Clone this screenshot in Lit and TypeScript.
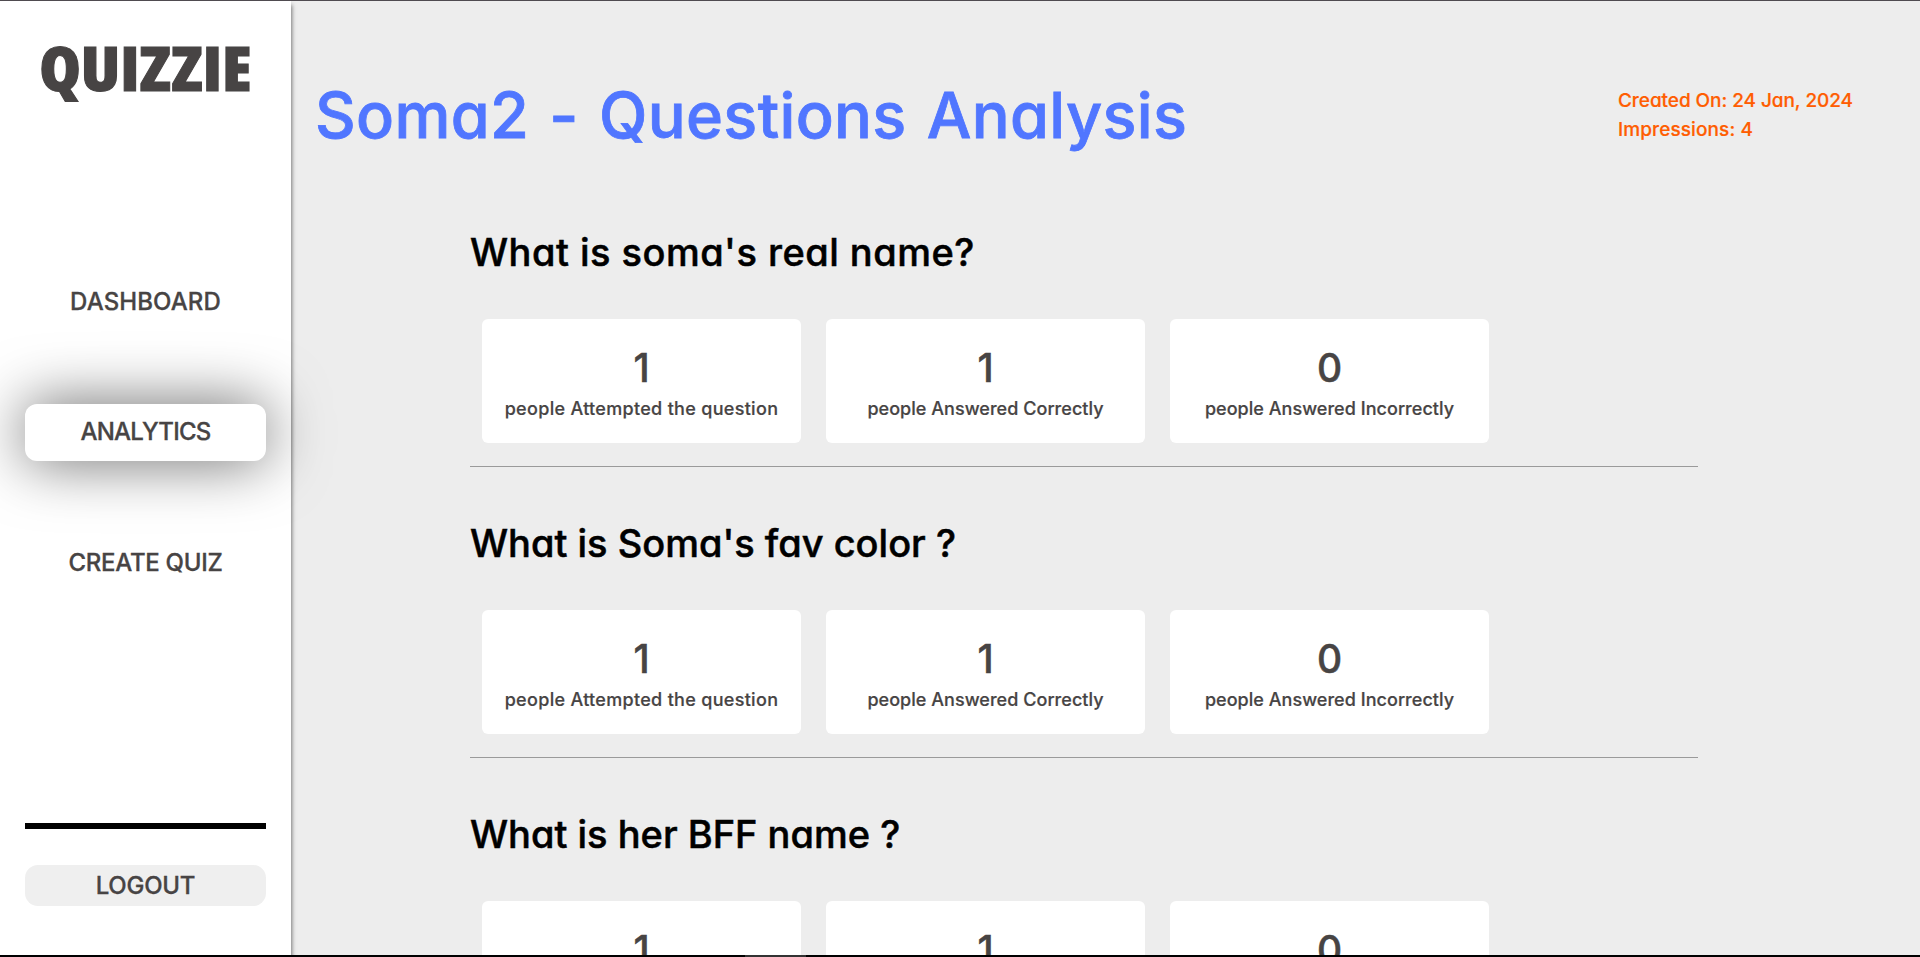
import { LitElement, html, css } from "lit";
import { customElement } from "lit/decorators.js";

interface Question {
  title: string;
  fit: string;
  attempted: number;
  correct: number;
  incorrect: number;
}

const QUESTIONS: Question[] = [
  { title: "What is soma's real name?", fit: "wide", attempted: 1, correct: 1, incorrect: 0 },
  { title: "What is Soma's fav color ?", fit: "", attempted: 1, correct: 1, incorrect: 0 },
  { title: "What is her BFF name ?", fit: "", attempted: 1, correct: 1, incorrect: 0 },
];

@customElement("quiz-sidebar")
class QuizSidebar extends LitElement {
  static styles = css`
    :host {
      display: flex;
      flex-direction: column;
      flex: none;
      box-sizing: border-box;
      width: 291px;
      padding: 26px 25px 49px;
      background: #fff;
      box-shadow: 1px 4px 4px rgba(0, 0, 0, 0.5);
      color: #474444;
      font: 500 24px/38px Inter, sans-serif;
      -webkit-text-stroke: 0.3px currentColor;
      position: relative;
      z-index: 1;
    }
    .logo {
      height: 80px;
      font: 800 61.5px/80px "Open Sans", sans-serif;
      font-stretch: 75%;
      -webkit-text-stroke: 1px #474444;
      text-align: center;
      white-space: nowrap;
      transform: scaleX(1.09);
    }
    nav {
      display: flex;
      flex-direction: column;
      gap: 73.5px;
      margin-top: 166px;
    }
    .item {
      height: 57px;
      box-sizing: border-box;
      padding: 10px 0 9px;
      border-radius: 12px;
      text-align: center;
      white-space: nowrap;
    }
    .active {
      padding: 9px 0 10px;
      background: #fff;
      box-shadow: 0 0 61px rgba(0, 0, 0, 0.6);
    }
    .dashboard { letter-spacing: 0.1px; }
    .analytics { letter-spacing: -0.75px; }
    .create { letter-spacing: -0.3px; }
    .rule {
      height: 6px;
      margin-top: auto;
      background: #000;
    }
    .logout {
      margin-top: 36px;
      height: 41px;
      line-height: 41px;
      letter-spacing: -0.25px;
      border-radius: 13px;
      background: #efefef;
      text-align: center;
    }
  `;

  render() {
    return html`
      <div class="logo">QUIZZIE</div>
      <nav>
        <div class="item dashboard">DASHBOARD</div>
        <div class="item active analytics">ANALYTICS</div>
        <div class="item create">CREATE QUIZ</div>
      </nav>
      <div class="rule"></div>
      <div class="logout">LOGOUT</div>
    `;
  }
}

@customElement("app-root")
class AppRoot extends LitElement {
  static styles = css`
    :host {
      display: flex;
      flex-direction: column;
      height: 957px;
      overflow: hidden;
      background: #ededed;
      font-family: Inter, sans-serif;
      font-weight: 500;
      font-feature-settings: "cv11";
    }
    .top {
      flex: none;
      height: 1px;
      background: #4f4b50;
    }
    .body {
      display: flex;
      flex: 1;
      min-height: 0;
      overflow: hidden;
    }
    .bottom {
      flex: none;
      height: 2px;
      padding-left: 745px;
      background: #000;
    }
    .thumb {
      width: 61px;
      height: 2px;
      background: #333;
    }
    main {
      flex: 1;
      min-width: 0;
      padding-top: 74px;
    }
    header {
      display: flex;
      align-items: center;
      justify-content: space-between;
      padding: 0 67px 0 24px;
    }
    h1 {
      margin: 0;
      font: inherit;
      font-feature-settings: "cv11";
      font-size: 63px;
      line-height: 80px;
      letter-spacing: 0.35px;
      word-spacing: 3px;
      -webkit-text-stroke: 0.8px #5076ff;
      color: #5076ff;
      white-space: nowrap;
    }
    .meta {
      font-size: 19px;
      line-height: 29px;
      letter-spacing: -0.06px;
      -webkit-text-stroke: 0.2px #ff5d01;
      color: #ff5d01;
      white-space: nowrap;
    }
    .impressions { letter-spacing: 0.1px; }
    .questions {
      width: 1228px;
      margin: 67px 0 0 179px;
    }
    section {
      height: 244px;
      margin-bottom: 46px;
      border-bottom: 1px solid #9a9a9a;
    }
    h2 {
      margin: 0;
      font: inherit;
      font-feature-settings: "cv11";
      font-size: 38px;
      line-height: 60px;
      letter-spacing: 0;
      -webkit-text-stroke: 0.5px #000;
      color: #000;
      white-space: nowrap;
    }
    h2.wide { letter-spacing: 0.48px; }
    .cards {
      display: flex;
      gap: 25px;
      margin: 37px 0 0 12px;
    }
    .card {
      width: 319px;
      height: 124px;
      box-sizing: border-box;
      padding-top: 24px;
      border-radius: 6px;
      background: #fff;
      color: #474444;
      text-align: center;
      white-space: nowrap;
    }
    .num {
      font-size: 39px;
      line-height: 50px;
      -webkit-text-stroke: 0.5px currentColor;
    }
    .label {
      font-size: 18px;
      line-height: 31px;
      letter-spacing: 0.04px;
      -webkit-text-stroke: 0.2px currentColor;
    }
    .label.attempted { letter-spacing: 0.31px; }
  `;

  card(value: number, label: string, kind: string) {
    return html`
      <div class="card">
        <div class="num">${value}</div>
        <div class="label ${kind}">${label}</div>
      </div>
    `;
  }

  render() {
    return html`
      <div class="top"></div>
      <div class="body">
        <quiz-sidebar></quiz-sidebar>
        <main>
          <header>
            <h1>Soma2 - Questions Analysis</h1>
            <div class="meta">
              <div>Created On: 24 Jan, 2024</div>
              <div class="impressions">Impressions: 4</div>
            </div>
          </header>
          <div class="questions">
            ${QUESTIONS.map(
              (q) => html`
                <section>
                  <h2 class=${q.fit}>${q.title}</h2>
                  <div class="cards">
                    ${this.card(q.attempted, "people Attempted the question", "attempted")}
                    ${this.card(q.correct, "people Answered Correctly", "correct")}
                    ${this.card(q.incorrect, "people Answered Incorrectly", "incorrect")}
                  </div>
                </section>
              `,
            )}
          </div>
        </main>
      </div>
      <div class="bottom"><div class="thumb"></div></div>
    `;
  }
}
